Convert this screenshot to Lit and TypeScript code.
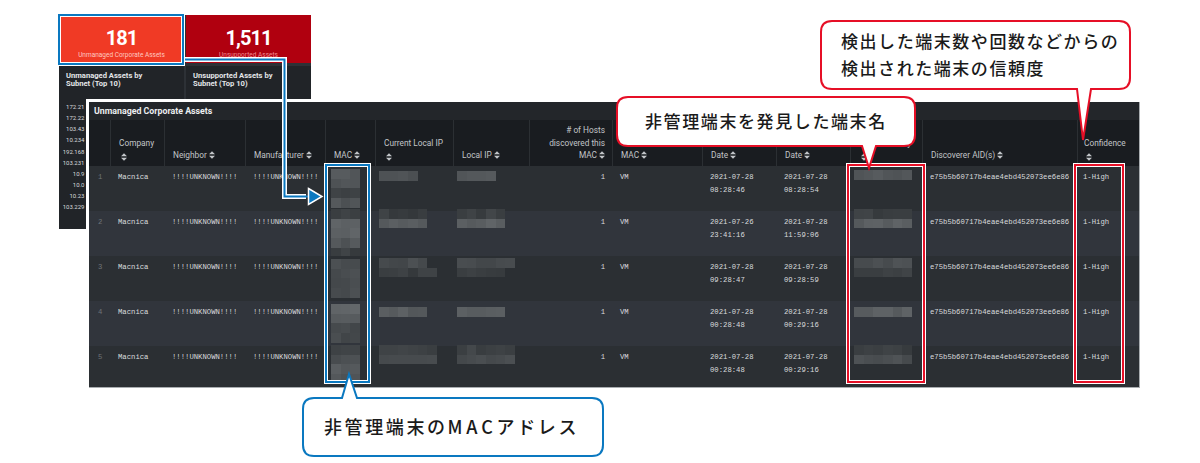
import { LitElement, html, css, svg } from "lit";
import { customElement } from "lit/decorators.js";

const COLS = [21, 54, 81, 80, 50, 78, 76, 83, 90, 74, 74, 72, 155, 62];
type Head = { t: string; stack?: boolean; right?: boolean };
const HEADS: Head[] = [
  { t: "" },
  { t: "Company", stack: true },
  { t: "Neighbor" },
  { t: "Manufacturer" },
  { t: "MAC" },
  { t: "Current Local IP", stack: true },
  { t: "Local IP" },
  { t: "# of Hosts discovered this MAC", right: true },
  { t: "MAC" },
  { t: "Date" },
  { t: "Date" },
  { t: "Discovered By", stack: true },
  { t: "Discoverer AID(s)" },
  { t: "Confidence", stack: true },
];
const ROWS = [
  ["2021-07-28", "08:28:46", "2021-07-28", "08:28:54"],
  ["2021-07-26", "23:41:16", "2021-07-28", "11:59:06"],
  ["2021-07-28", "09:28:47", "2021-07-28", "09:28:59"],
  ["2021-07-28", "00:28:48", "2021-07-28", "00:29:16"],
  ["2021-07-28", "00:28:48", "2021-07-28", "00:29:16"],
];
const SUBNETS = ["172.21", "172.22", "103.43", "10.234", "192.168", "103.231", "10.9", "10.0", "10.23", "103.229"];

// Each blurred block: top offset inside the row, then [cell count, brightness] per line.
type Blur = { top: number; lines: [number, number][] };
const MAC: Blur[] = [
  { top: 3, lines: [[3, 84], [3, 78], [3, 66], [3, 80]] },
  { top: -2, lines: [[3, 60], [3, 92], [3, 94], [3, 82], [3, 60]] },
  { top: 3, lines: [[3, 76], [3, 70], [3, 70], [3, 74]] },
  { top: 3, lines: [[3, 94], [3, 84], [3, 66], [3, 70]] },
  { top: -1, lines: [[3, 64], [3, 72], [3, 88], [3, 80]] },
];
const IP1: Blur[] = [
  { top: 5, lines: [[4, 80]] },
  { top: -2, lines: [[5, 58], [5, 88]] },
  { top: 2, lines: [[5, 72], [6, 58]] },
  { top: 6, lines: [[5, 88]] },
  { top: -1, lines: [[6, 62], [6, 72]] },
];
const IP2: Blur[] = [
  { top: 5, lines: [[4, 84]] },
  { top: -2, lines: [[5, 60], [5, 92]] },
  { top: 2, lines: [[6, 72], [5, 58]] },
  { top: 6, lines: [[5, 92]] },
  { top: -1, lines: [[6, 62], [6, 74]] },
];
const HOST: Blur[] = [
  { top: 4, lines: [[6, 84]] },
  { top: -2, lines: [[6, 58], [6, 90]] },
  { top: 2, lines: [[6, 76], [6, 58]] },
  { top: 6, lines: [[6, 92]] },
  { top: -1, lines: [[6, 60], [6, 74]] },
];

function mosaic(b: Blur, seed: number) {
  const lines = b.lines.map(([n, v], l) => {
    const cells = [];
    for (let i = 0; i < n; i++) {
      const r = Math.abs(Math.sin(seed * 12.9 + l * 37.7 + i * 78.2) * 43758.5) % 1;
      const c = Math.round(v + (r - 0.5) * 12);
      cells.push(html`<i style="background:rgb(${c},${c + 4},${c + 7})"></i>`);
    }
    return html`<div class="line">${cells}</div>`;
  });
  return html`<div class="mosaic" style="margin-top:${b.top}px">${lines}</div>`;
}

const sortIcon = svg`<svg class="sort" viewBox="0 0 7 9" width="6" height="8"><path d="M3.5 0 7 3.6H0zM3.5 9 0 5.4h7z" fill="currentColor"/></svg>`;

@customElement("app-root")
export class AppRoot extends LitElement {
  static styles = css`
    :host { display: block; position: relative; width: 1200px; height: 463px; background: #fff; overflow: hidden;
      font-family: Roboto, "Liberation Sans", sans-serif; }
    .back { position: absolute; left: 59px; top: 15px; width: 252px; height: 214px; display: flex; flex-direction: column; background: #2d3136; }
    .tiles { display: grid; grid-template-columns: 125px 125px; gap: 2px; height: 48px; }
    .tile { color: #fff; display: flex; flex-direction: column; align-items: center; padding-top: 13px; box-sizing: border-box; }
    .tile.a { background: #f03a25; } .tile.b { background: #b0000f; }
    .tile b { font: 700 20px/20px Roboto, sans-serif; letter-spacing: -1px; }
    .tile span { font-size: 6.5px; line-height: 9px; color: #ffc9c0; margin-top: 3px; white-space: nowrap; }
    .tile.b span { color: #f08a90; }
    .subs { margin-top: 3px; flex: 1; display: grid; grid-template-columns: 125px 125px; gap: 2px; }
    .sub { background: #212428; color: #e4e6e8; font-size: 7.6px; font-weight: 700; line-height: 7.6px; padding: 6px 7px; box-sizing: border-box; }
    .nums { width: 18.5px; margin-top: 14px; display: flex; flex-direction: column; align-items: flex-end; color: #d7d9db; font-size: 6px; font-weight: 400; line-height: 11.1px; white-space: nowrap; }

    .panel { position: absolute; left: 89px; top: 102px; width: 1051px; height: 286px; box-sizing: border-box; background: #2b2f33; outline: 3px solid #fff; border-right: 1px solid #a9adb0; border-bottom: 1px solid #a9adb0; display: flex; flex-direction: column; color: #d7dadc; }
    .title { height: 18px; flex: none; background: #23262a; font-size: 8.8px; font-weight: 700; color: #eceef0; line-height: 18px; padding-left: 5px; }
    .head, .row { display: grid; grid-template-columns: var(--cols); }
    .head { height: 46px; flex: none; background: #191c20; }
    .hc { border-left: 1px solid #2b2f33; box-sizing: border-box; padding: 0 3px 4px 8px; display: flex; flex-direction: column; justify-content: flex-end; font-size: 8.3px; line-height: 12.6px; color: #c2c5c8; overflow: hidden; }
    .hc:first-child { border-left: 0; }
    .hc:last-child { padding-left: 6px; }
    .hc.right { text-align: right; padding-right: 7px; }
    .sort { display: inline-block; vertical-align: -1px; margin-left: 2px; color: #c2c5c8; }
    .hc.stack .sort { display: block; margin-left: 2px; margin-top: 3px; margin-bottom: 1px; }
    .row { height: 45px; flex: none; font: 7.25px/13px "Liberation Mono", "DejaVu Sans Mono", monospace; color: #d9dbdd; }
    .row.last { height: 41px; }
    .row.odd { background: #2b2f33; } .row.even { background: #31353c; }
    .c { padding: 4.5px 2px 0 8px; box-sizing: border-box; white-space: nowrap; }
    .c.idx { color: #6f7478; padding-left: 9px; }
    .c.r { text-align: right; padding-right: 7px; }
    .c.last { padding-left: 6px; }
    .c.m { padding: 0; }
    .c.mac { padding-left: 6px; }
    .c.ip1 { padding-left: 4px; }
    .c.ip2 { padding-left: 4px; }
    .c.host { padding-left: 4px; }
    .mosaic { display: flex; flex-direction: column; }
    .line { display: flex; height: 9.67px; }
    .line i { display: block; width: 9.67px; }

    .mark { position: absolute; box-sizing: border-box; border: 1px solid #fff; pointer-events: none; }
    .mark::before { content: ""; position: absolute; inset: 0; border: 2px solid var(--c); box-shadow: inset 0 0 0 1px #fff; }
    .mark.blue { --c: #0a78c0; }
    .mark.red { --c: #e60f26; }
    .overlay { position: absolute; inset: 0; width: 1200px; height: 463px; pointer-events: none; }
    .cap { position: absolute; color: #1a1a1a; font-family: "Noto Sans CJK JP", sans-serif; font-weight: 500; white-space: nowrap; }
    .cap.one { left: 645px; top: 108px; font-size: 17px; line-height: 26px; letter-spacing: 1.6px; }
    .cap.two { left: 841px; top: 27px; font-size: 17px; line-height: 27px; letter-spacing: 1.55px; }
    .cap.three { left: 324px; top: 413px; font-size: 18px; line-height: 26px; letter-spacing: 2.6px; }
    .cap.three span { letter-spacing: 3.8px; }
  `;

  render() {
    const cols = COLS.map((c) => c + "px").join(" ");
    return html`
      <div class="back">
        <div class="tiles">
          <div class="tile a"><b>181</b><span>Unmanaged Corporate Assets</span></div>
          <div class="tile b"><b>1,511</b><span>Unsupported Assets</span></div>
        </div>
        <div class="subs">
          <div class="sub">
            Unmanaged Assets by<br />Subnet (Top 10)
            <div class="nums">${SUBNETS.map((s) => html`<span>${s}</span>`)}</div>
          </div>
          <div class="sub">Unsupported Assets by<br />Subnet (Top 10)</div>
        </div>
      </div>

      <div class="panel" style="--cols:${cols}">
        <div class="title">Unmanaged Corporate Assets</div>
        <div class="head">
          ${HEADS.map(
            (h) => html`<div class="hc ${h.stack ? "stack" : ""} ${h.right ? "right" : ""}">
              <span>${h.t}${h.t && !h.stack ? sortIcon : ""}</span>${h.stack ? sortIcon : ""}
            </div>`,
          )}
        </div>
        ${ROWS.map(
          (r, i) => html`<div class="row ${i % 2 ? "even" : "odd"} ${i === 4 ? "last" : ""}">
            <div class="c idx">${i + 1}</div>
            <div class="c">Macnica</div>
            <div class="c">!!!!UNKNOWN!!!!</div>
            <div class="c">!!!!UNKNOWN!!!!</div>
            <div class="c m mac">${mosaic(MAC[i], i + 1)}</div>
            <div class="c m ip1">${mosaic(IP1[i], i + 11)}</div>
            <div class="c m ip2">${mosaic(IP2[i], i + 21)}</div>
            <div class="c r">1</div>
            <div class="c">VM</div>
            <div class="c">${r[0]}<br />${r[1]}</div>
            <div class="c">${r[2]}<br />${r[3]}</div>
            <div class="c m host">${mosaic(HOST[i], i + 31)}</div>
            <div class="c">e75b5b60717b4eae4ebd452073ee6e86</div>
            <div class="c last">1-High</div>
          </div>`,
        )}
      </div>

      <div class="mark blue" style="left:324px;top:163px;width:47px;height:221px"></div>
      <div class="mark red" style="left:846px;top:163px;width:80px;height:221px"></div>
      <div class="mark red" style="left:1073px;top:163px;width:52px;height:221px"></div>
      <div class="mark blue" style="left:57px;top:13px;width:128px;height:53px"></div>

      <svg class="overlay" viewBox="0 0 1200 463">
        <path d="M185 59.5H284.500V196.500H306" fill="none" stroke="#fff" stroke-width="5"/>
        <path d="M185 59.500H284.500V196.500H308" fill="none" stroke="#0a78c0" stroke-width="2"/>
        <path d="M308.500 188.500 322 196.500 308.500 204.500Z" fill="#0a78c0" stroke="#fff" stroke-width="1.500"/>
        <path d="M628 97H904Q915 97 915 108V135Q915 146 904 146H876L869 168 862 146H628Q617 146 617 135V108Q617 97 628 97Z" fill="#fff" stroke="#e60f26" stroke-width="2"/>
        <path d="M832 21H1119Q1130 21 1130 32V78Q1130 89 1119 89H1091L1083 140 1077 89H832Q821 89 821 78V32Q821 21 832 21Z" fill="#fff" stroke="#e60f26" stroke-width="2"/>
        <path d="M349 374 357 398H592Q603 398 603 409V445Q603 456 592 456H314Q303 456 303 445V409Q303 398 314 398H342Z" fill="#fff" stroke="#0a78c0" stroke-width="2"/>
      </svg>
      <div class="cap one">非管理端末を発見した端末名</div>
      <div class="cap two">検出した端末数や回数などからの<br />検出された端末の信頼度</div>
      <div class="cap three">非管理端末の<span>MAC</span>アドレス</div>
    `;
  }
}
